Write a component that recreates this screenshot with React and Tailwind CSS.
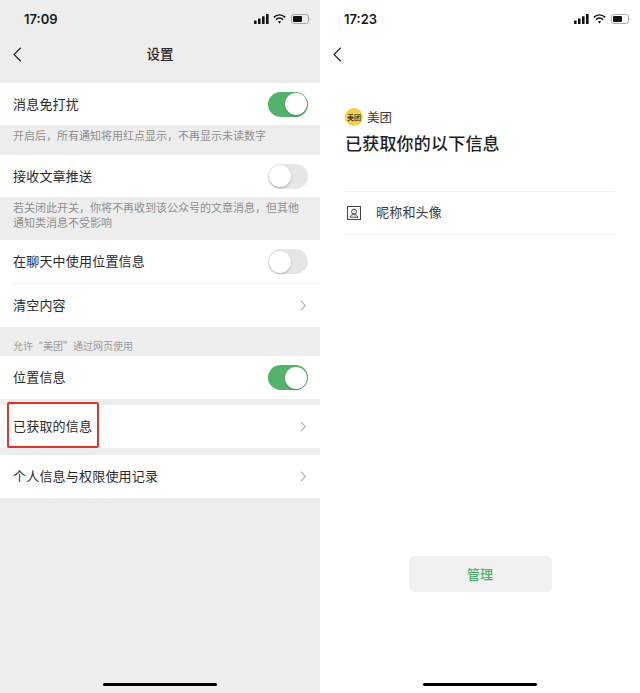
import React from 'react';

const font = { fontFamily: '"Noto Sans CJK SC", "Liberation Sans", sans-serif' };

const StatusBar = ({ time }) => (
  <div className="flex h-[38px] items-center justify-between pl-6 pr-[8px]">
    <span className="font-['Inter',sans-serif] text-[13px] font-semibold leading-[24px] text-[#1a1a1a]">{time}</span>
    <div className="flex items-center gap-[4px] pr-[1px]">
      <svg width="15" height="10" viewBox="0 0 15 10" fill="#111">
        <rect x="0" y="6.5" width="2.6" height="3.5" rx="0.5" />
        <rect x="4" y="4.5" width="2.6" height="5.5" rx="0.5" />
        <rect x="8" y="2.3" width="2.6" height="7.7" rx="0.5" />
        <rect x="12" y="0" width="2.6" height="10" rx="0.5" />
      </svg>
      <svg width="13" height="10" viewBox="0 0 13 10" fill="none" stroke="#111" strokeWidth="1.6">
        <path d="M0.8 3.4C4.2 0.2 8.8 0.2 12.2 3.4" />
        <path d="M2.9 5.6C5 3.7 8 3.7 10.1 5.6" />
        <path d="M6.5 9.4L4.9 7.6C5.8 6.8 7.2 6.8 8.1 7.6Z" fill="#111" stroke="none" />
      </svg>
      <svg width="20" height="10" viewBox="0 0 20 10" fill="none" className="ml-[1px]">
        <rect x="0.5" y="0.5" width="17" height="9" rx="2.4" stroke="#aaa" />
        <rect x="2" y="2" width="9" height="6" rx="1" fill="#111" />
        <path d="M18.6 3.4C19.4 3.7 19.4 6.3 18.6 6.6Z" fill="#aaa" />
      </svg>
    </div>
  </div>
);

const BackArrow = () => (
  <svg width="9" height="15" viewBox="0 0 9 15" fill="none" stroke="#222" strokeWidth="1.2">
    <path d="M7.8 0.8L1 7.5L7.8 14.2" />
  </svg>
);

const Chevron = () => (
  <svg width="6" height="11" viewBox="0 0 6 11" fill="none" stroke="#b0b0b0" strokeWidth="1.1" className="mr-[2px]">
    <path d="M0.7 0.7L5.3 5.5L0.7 10.3" />
  </svg>
);

const Toggle = ({ on }) => (
  <div
    className={
      on
        ? 'flex h-[25px] w-[40px] items-center justify-end rounded-full bg-[#52b46b] pr-[1.5px]'
        : 'flex h-[25px] w-[40px] items-center justify-start rounded-full bg-[#e6e6e6] pl-[1px]'
    }
  >
    <div className="h-[22px] w-[22px] rounded-full bg-white shadow-[0_1px_2px_rgba(0,0,0,0.25)]" />
  </div>
);

const Row = ({ label, height = 'h-[42px]', right, children }) => (
  <div className={`relative flex ${height} items-center justify-between bg-white pl-[13px] pr-[12px]`}>
    <span className={height === 'h-[42px]' ? 'text-[13px] tracking-[0.2px] text-[#2a2a2a]' : 'pb-[2px] text-[13px] tracking-[0.2px] text-[#2a2a2a]'}>
      {label}
    </span>
    {right}
    {children}
  </div>
);

const HomeBar = () => (
  <div className="mt-auto flex justify-center pb-[7px]">
    <div className="h-[3px] w-[114px] rounded-full bg-black" />
  </div>
);

export default function App() {
  return (
    <div className="flex h-[693px] w-[640px] overflow-hidden" style={font}>
      <div className="flex w-[320px] flex-col bg-[#ededed]">
        <StatusBar time="17:09" />
        <div className="relative flex h-[33px] items-center justify-center pb-[2px]">
          <div className="absolute left-[13px] top-[9px]"><BackArrow /></div>
          <span className="text-[13.5px] font-medium text-[#2a2a2a]">设置</span>
        </div>
        <div className="h-[12px]" />

        <Row label="消息免打扰" right={<Toggle on />} />
        <div className="h-[30px] pl-[13px] text-[11px] leading-[20px] text-[#8f8f8f]">
          开启后，所有通知将用红点显示，不再显示未读数字
        </div>
        <Row label="接收文章推送" right={<Toggle />} />
        <div className="h-[43px] pl-[13px] pr-[20px] pt-[3px] text-[11px] leading-[14.5px] text-[#8f8f8f]">
          若关闭此开关，你将不再收到该公众号的文章消息，但其他通知类消息不受影响
        </div>
        <Row label="在聊天中使用位置信息" height="h-[43px]" right={<Toggle />} />
        <div className="h-px bg-white pl-[13px]"><div className="h-px bg-[#f0f0f0]" /></div>
        <Row label="清空内容" height="h-[43px]" right={<Chevron />} />
        <div className="h-[29px] pl-[13px] pt-[9px] text-[10px] leading-[20px] text-[#9a9a9a]">
          允许“美团”通过网页使用
        </div>
        <Row label="位置信息" height="h-[43px]" right={<Toggle on />} />
        <div className="h-[6px]" />
        <Row label="已获取的信息" height="h-[43px]" right={<Chevron />}>
          <div className="absolute -top-[3px] left-[7px] h-[46px] w-[92px] rounded-[2px] border-2 border-[#e0352b]" />
        </Row>
        <div className="h-[7px]" />
        <Row label="个人信息与权限使用记录" height="h-[43px]" right={<Chevron />} />
        <HomeBar />
      </div>

      <div className="flex w-[320px] flex-col bg-white">
        <StatusBar time="17:23" />
        <div className="h-[33px] pl-[13px] pt-[9px]"><BackArrow /></div>
        <div className="pl-[25px] pr-[25px] pt-[37px]">
          <div className="flex items-center gap-[4px]">
            <div className="flex h-[18px] w-[18px] items-center justify-center rounded-full bg-[#f6cf45] text-[7px] font-medium leading-none text-[#2a2a2a]">
              美团
            </div>
            <span className="text-[12.5px] leading-[18px] text-[#3a3a3a]">美团</span>
          </div>
          <h1 className="mt-[4px] text-[17px] font-medium leading-[26px] tracking-[0.2px] text-[#1f1f1f]">已获取你的以下信息</h1>
          <div className="mt-[35px] flex h-[44px] items-center border-y border-[#f0f0f0]">
            <svg width="14" height="14" viewBox="0 0 14 14" fill="none" stroke="#444" strokeWidth="1" className="ml-[2px]">
              <rect x="0.5" y="0.5" width="13" height="13" />
              <circle cx="7" cy="5.6" r="2.4" />
              <path d="M3 11.2C3.6 9.2 5 8.6 7 8.6C9 8.6 10.4 9.2 11 11.2Z" />
            </svg>
            <span className="ml-[15px] pb-[2px] text-[13px] tracking-[0.2px] text-[#3a3a3a]">昵称和头像</span>
          </div>
        </div>
        <div className="mt-[321px] flex justify-center">
          <button className="h-[36px] w-[143px] rounded-[6px] bg-[#f1f1f1] text-[13px] font-medium text-[#4caf68]">管理</button>
        </div>
        <HomeBar />
      </div>
    </div>
  );
}
